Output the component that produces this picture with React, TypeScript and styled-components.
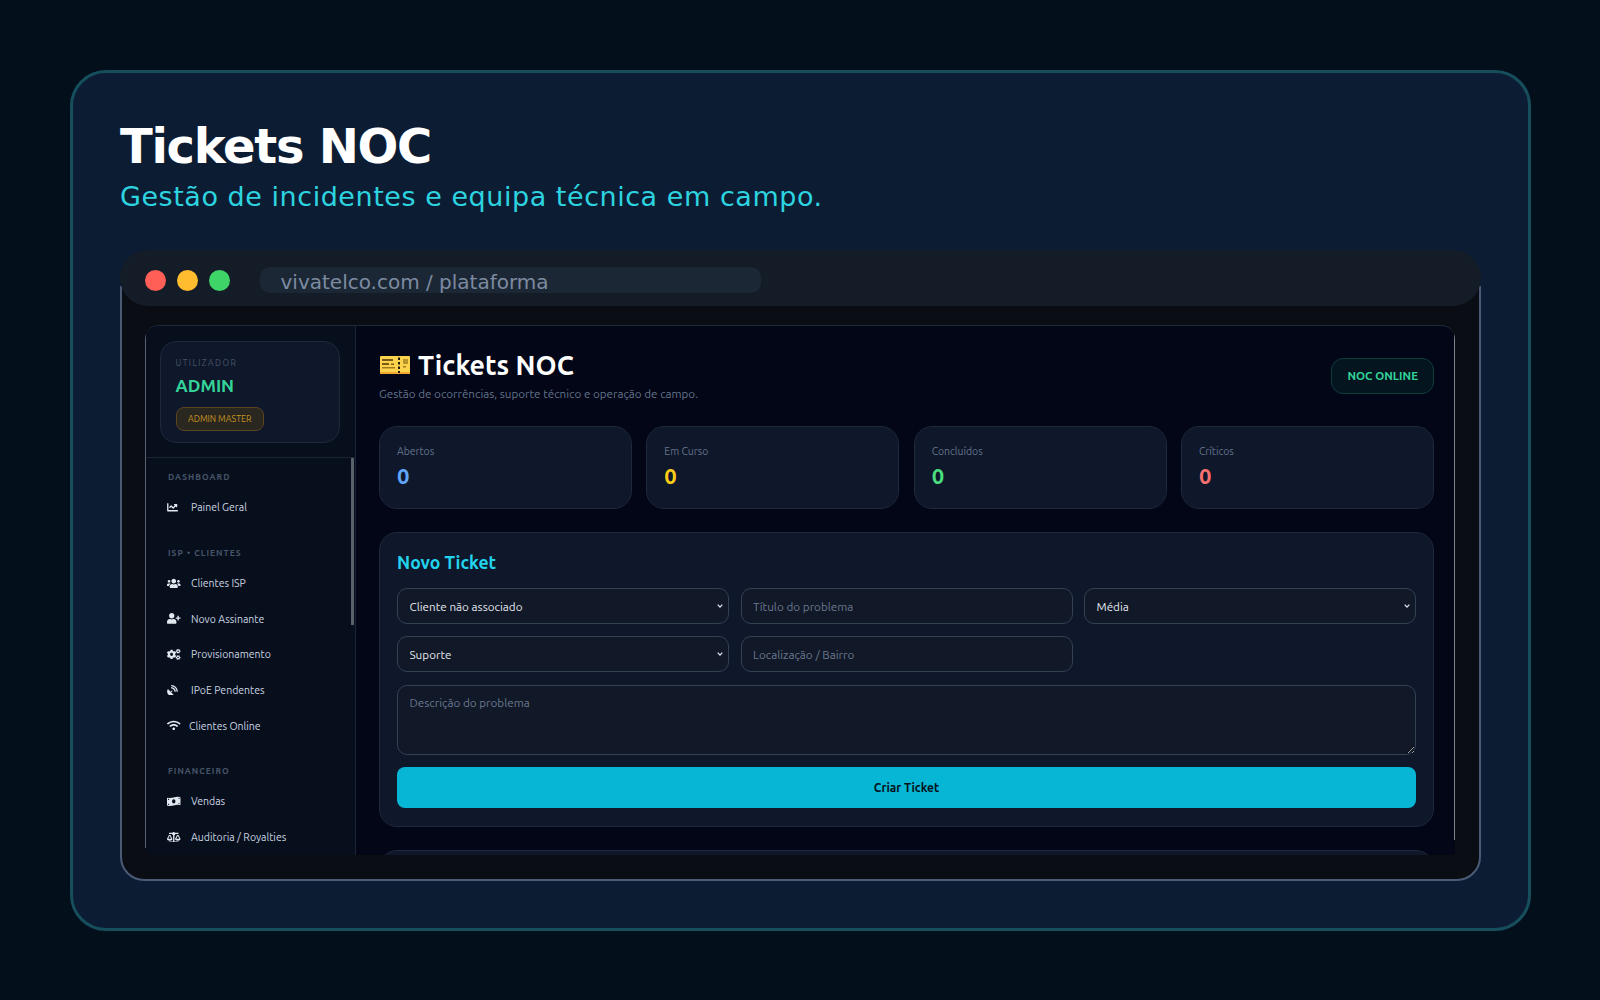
import React from 'react'
import styled, { createGlobalStyle } from 'styled-components'
import {
  FaChartLine,
  FaUsers,
  FaUserPlus,
  FaCogs,
  FaSatelliteDish,
  FaWifi,
  FaMoneyBillWave,
  FaBalanceScale,
} from 'react-icons/fa'

const GlobalStyle = createGlobalStyle`
  html, body {
    margin: 0;
    padding: 0;
    height: 1000px;
    overflow: hidden;
    background: #040f1c;
  }
  * { box-sizing: border-box; }
`

const Page = styled.div`
  width: 1600px;
  height: 1000px;
  padding: 70px 0 0 70px;
`

const Slide = styled.section`
  width: 1461px;
  height: 861px;
  padding: 45px 47px 47px;
  background: #0c1d33;
  border: 3px solid #164e5c;
  border-radius: 36px;
  font-family: 'DejaVu Sans', sans-serif;
`

const SlideTitle = styled.h1`
  margin: 0;
  font-size: 48px;
  line-height: 56px;
  font-weight: 700;
  letter-spacing: -1.3px;
  color: #ffffff;
`

const SlideSubtitle = styled.p`
  margin: 4px 0 0;
  font-size: 27px;
  line-height: 38px;
  letter-spacing: 0.54px;
  color: #2dd4e0;
`

const BrowserFrame = styled.div`
  height: 595px;
  margin-top: 70px;
  background: #0a0d14;
  border: 2px solid #4b5b75;
  border-top: 0;
  border-radius: 0 0 24px 24px;
`

const BrowserBar = styled.div`
  position: relative;
  top: -36px;
  margin: 0 -2px -36px;
  height: 56px;
  padding: 17px 25px 13px;
  display: flex;
  align-items: flex-start;
  background: #141c28;
  border-radius: 28px;
`

const Dot = styled.span<{ $color: string }>`
  width: 21px;
  height: 21px;
  margin-top: 3px;
  margin-right: 11px;
  border-radius: 50%;
  background: ${(p) => p.$color};
`

const UrlBar = styled.div`
  width: 501px;
  height: 26px;
  margin-left: 19px;
  padding-left: 20.5px;
  background: #1c2735;
  border-radius: 10px;
  font-size: 20px;
  line-height: 30px;
  color: #7d8ba1;
  white-space: nowrap;
`

const Screen = styled.div`
  position: relative;
  display: flex;
  height: 530px;
  margin: 19px 24px 0 23px;
  overflow: hidden;
  background: #020617;
  border-top: 1px solid #1e293b;
  border-radius: 14px 14px 4px 8px;
  font-family: Ubuntu, 'Noto Sans', sans-serif;

  /* the thin light edges of the captured app window */
  &::before,
  &::after {
    content: '';
    position: absolute;
    top: 6px;
    width: 1px;
    z-index: 1;
  }
  &::before {
    left: 0;
    bottom: 7px;
    background: #596271;
  }
  &::after {
    right: 0;
    bottom: 15px;
    background: #7d828c;
  }
`

const Sidebar = styled.aside`
  position: relative;
  flex: 0 0 211px;
  background: #070f1d;
  border-right: 1px solid #1a2436;
`

const UserBox = styled.div`
  height: 132px;
  padding: 15px 15px;
  border-bottom: 1px solid #1a2436;
`

const UserCard = styled.div`
  height: 102px;
  padding: 16px 14.5px;
  background: #0f172a;
  border: 1px solid #1e293b;
  border-radius: 16px;
`

const UserLabel = styled.div`
  font-size: 8.5px;
  line-height: 10px;
  letter-spacing: 1.4px;
  color: #475569;
`

const UserName = styled.div`
  margin-top: 7px;
  font-size: 17.4px;
  line-height: 22px;
  font-weight: 700;
  color: #34d399;
`

const RoleBadge = styled.span`
  display: inline-block;
  margin-top: 10px;
  height: 24px;
  padding: 0 11.5px;
  font-size: 8.8px;
  line-height: 22px;
  color: #c8951f;
  background: #2a2620;
  border: 1px solid #5c4520;
  border-radius: 8px;
`

const ScrollThumb = styled.div`
  position: absolute;
  top: 132px;
  right: 1px;
  width: 3px;
  height: 167px;
  background: #5b616b;
`

const Nav = styled.nav`
  padding: 13px 0 0 23px;
`

const NavLabel = styled.div`
  height: 12px;
  font-size: 8.5px;
  line-height: 12px;
  font-weight: 700;
  letter-spacing: 1.05px;
  color: #475569;
`

const NavList = styled.ul`
  margin: 6.7px 0 21.5px;
  padding: 0;
  list-style: none;
`

const NavItem = styled.li`
  display: flex;
  align-items: center;
  height: 35.6px;
  font-size: 10.5px;
  color: #cbd5e1;
  white-space: nowrap;
`

const NavIcon = styled.span<{ $box?: number; $width?: number }>`
  display: flex;
  align-items: center;
  flex: 0 0 ${(p) => p.$box ?? 24}px;
  margin-left: -1px;
  svg {
    width: ${(p) => p.$width ?? 13.5}px;
    height: 10.8px;
    color: #e2e8f0;
  }
`

const Main = styled.main`
  flex: 1;
  min-width: 0;
  padding: 23px 21px 0 23px;
`

const MainHeader = styled.header`
  display: flex;
  justify-content: space-between;
  align-items: flex-start;
  height: 77px;
`

const HeaderText = styled.div`
  min-width: 0;
`

const MainTitle = styled.h2`
  display: flex;
  align-items: center;
  gap: 8px;
  margin: 0;
  height: 32px;
  font-size: 26.8px;
  line-height: 30px;
  font-weight: 700;
  color: #ffffff;

  svg {
    margin-left: 1px;
  }
`

const MainSubtitle = styled.p`
  margin: 5px 0 0;
  font-size: 11.65px;
  line-height: 16px;
  color: #64748b;
`

const StatusPill = styled.div`
  margin-top: 9px;
  height: 36px;
  padding: 0 15px;
  font-size: 11.5px;
  line-height: 34px;
  font-weight: 700;
  color: #34d399;
  background: #04151f;
  border: 1px solid #0f3d3a;
  border-radius: 12px;
`

const StatGrid = styled.div`
  display: grid;
  grid-template-columns: repeat(4, 1fr);
  gap: 14.33px;
`

const StatCard = styled.div`
  height: 83px;
  padding: 17px;
  background: #0f172a;
  border: 1px solid #1e293b;
  border-radius: 18px;
`

const StatLabel = styled.div`
  font-size: 10.4px;
  line-height: 14px;
  color: #64748b;
`

const StatValue = styled.div<{ $color: string }>`
  margin-top: 5px;
  font-size: 22px;
  line-height: 26px;
  font-weight: 700;
  color: ${(p) => p.$color};
`

const Panel = styled.div`
  margin-top: 23px;
  padding: 17px;
  height: 295px;
  background: #0f172a;
  border: 1px solid #1e293b;
  border-radius: 18px;
`

const PanelTitle = styled.h3`
  margin: 0;
  height: 38px;
  font-size: 17.6px;
  line-height: 25px;
  font-weight: 700;
  color: #22d3ee;
`

const FormGrid = styled.form`
  display: grid;
  grid-template-columns: repeat(3, 1fr);
  gap: 12px 11.5px;
`

const controlStyles = `
  width: 100%;
  height: 36px;
  padding: 0 11.5px;
  font-family: inherit;
  font-size: 11.7px;
  color: #e2e8f0;
  background-color: #111827;
  border: 1px solid #334155;
  border-radius: 10px;
  outline: none;
  color-scheme: dark;
  &::placeholder { color: #6b7890; opacity: 1; }
`

const Select = styled.select`
  ${controlStyles}
  appearance: none;
  background-image: url("data:image/svg+xml,%3Csvg xmlns='http://www.w3.org/2000/svg' width='6' height='4' viewBox='0 0 6 4'%3E%3Cpath d='M.7.7 3 3.1 5.3.7' fill='none' stroke='%23e2e8f0' stroke-width='1.2'/%3E%3C/svg%3E");
  background-repeat: no-repeat;
  background-position: right 5px center;
`

const Input = styled.input`
  ${controlStyles}
`

const TextArea = styled.textarea`
  ${controlStyles}
  grid-column: 1 / -1;
  display: block;
  margin-top: 0.5px;
  height: 70.5px;
  padding: 10px 11.5px;
`

const SubmitButton = styled.button`
  grid-column: 1 / -1;
  height: 41px;
  font-family: inherit;
  font-size: 12px;
  font-weight: 700;
  color: #04121c;
  background: #06b6d4;
  border: none;
  border-radius: 8px;
`

const TicketEmoji = () => (
  <svg width="30" height="18" viewBox="0 0 30 18">
    <rect width="30" height="18" rx="1" fill="#fcd34d" />
    <rect x="0" y="16" width="30" height="2" fill="#f0a92e" />
    <rect x="2" y="3" width="11" height="2" fill="#7a5a14" />
    <rect x="2" y="7" width="7" height="2" fill="#7a5a14" />
    <rect x="11" y="7.5" width="3" height="1.5" fill="#7a5a14" />
    <rect x="2" y="11" width="13" height="1.5" fill="#a07c1e" />
    <rect x="18" y="1.5" width="2" height="2.5" fill="#1f1a0a" />
    <rect x="18" y="6" width="2" height="2.5" fill="#1f1a0a" />
    <rect x="18" y="10.5" width="2" height="2.5" fill="#1f1a0a" />
    <rect x="18" y="15" width="2" height="2" fill="#1f1a0a" />
    <rect x="23" y="3" width="5" height="5" fill="#b8952c" />
    <rect x="23" y="10" width="3" height="1.5" fill="#a07c1e" />
  </svg>
)

const stats = [
  { label: 'Abertos', value: 0, color: '#60a5fa' },
  { label: 'Em Curso', value: 0, color: '#facc15' },
  { label: 'Concluídos', value: 0, color: '#4ade80' },
  { label: 'Críticos', value: 0, color: '#f87171' },
]

const navGroups = [
  {
    title: 'DASHBOARD',
    items: [{ label: 'Painel Geral', icon: <FaChartLine />, width: 11 }],
  },
  {
    title: 'ISP • CLIENTES',
    items: [
      { label: 'Clientes ISP', icon: <FaUsers /> },
      { label: 'Novo Assinante', icon: <FaUserPlus /> },
      { label: 'Provisionamento', icon: <FaCogs /> },
      { label: 'IPoE Pendentes', icon: <FaSatelliteDish />, width: 11 },
      { label: 'Clientes Online', icon: <FaWifi />, box: 22 },
    ],
  },
  {
    title: 'FINANCEIRO',
    items: [
      { label: 'Vendas', icon: <FaMoneyBillWave /> },
      { label: 'Auditoria / Royalties', icon: <FaBalanceScale /> },
    ],
  },
]

export default function App() {
  return (
    <Page>
      <GlobalStyle />
      <Slide>
        <SlideTitle>Tickets NOC</SlideTitle>
        <SlideSubtitle>Gestão de incidentes e equipa técnica em campo.</SlideSubtitle>

        <BrowserFrame>
          <BrowserBar>
            <Dot $color="#ff5f57" />
            <Dot $color="#febc2e" />
            <Dot $color="#3fd468" />
            <UrlBar>vivatelco.com / plataforma</UrlBar>
          </BrowserBar>

          <Screen>
            <Sidebar>
              <UserBox>
                <UserCard>
                  <UserLabel>UTILIZADOR</UserLabel>
                  <UserName>ADMIN</UserName>
                  <RoleBadge>ADMIN MASTER</RoleBadge>
                </UserCard>
              </UserBox>
              <ScrollThumb />
              <Nav>
                {navGroups.map((group) => (
                  <div key={group.title}>
                    <NavLabel>{group.title}</NavLabel>
                    <NavList>
                      {group.items.map((item) => (
                        <NavItem key={item.label}>
                          <NavIcon $box={item.box} $width={item.width}>{item.icon}</NavIcon>
                          {item.label}
                        </NavItem>
                      ))}
                    </NavList>
                  </div>
                ))}
              </Nav>
            </Sidebar>

            <Main>
              <MainHeader>
                <HeaderText>
                  <MainTitle>
                    <TicketEmoji />
                    Tickets NOC
                  </MainTitle>
                  <MainSubtitle>Gestão de ocorrências, suporte técnico e operação de campo.</MainSubtitle>
                </HeaderText>
                <StatusPill>NOC ONLINE</StatusPill>
              </MainHeader>

              <StatGrid>
                {stats.map((stat) => (
                  <StatCard key={stat.label}>
                    <StatLabel>{stat.label}</StatLabel>
                    <StatValue $color={stat.color}>{stat.value}</StatValue>
                  </StatCard>
                ))}
              </StatGrid>

              <Panel>
                <PanelTitle>Novo Ticket</PanelTitle>
                <FormGrid>
                  <Select defaultValue="none">
                    <option value="none">Cliente não associado</option>
                  </Select>
                  <Input placeholder="Título do problema" />
                  <Select defaultValue="media">
                    <option value="media">Média</option>
                  </Select>
                  <Select defaultValue="suporte">
                    <option value="suporte">Suporte</option>
                  </Select>
                  <Input placeholder="Localização / Bairro" />
                  <span />
                  <TextArea placeholder="Descrição do problema" />
                  <SubmitButton type="button">Criar Ticket</SubmitButton>
                </FormGrid>
              </Panel>

              <Panel />
            </Main>
          </Screen>
        </BrowserFrame>
      </Slide>
    </Page>
  )
}
